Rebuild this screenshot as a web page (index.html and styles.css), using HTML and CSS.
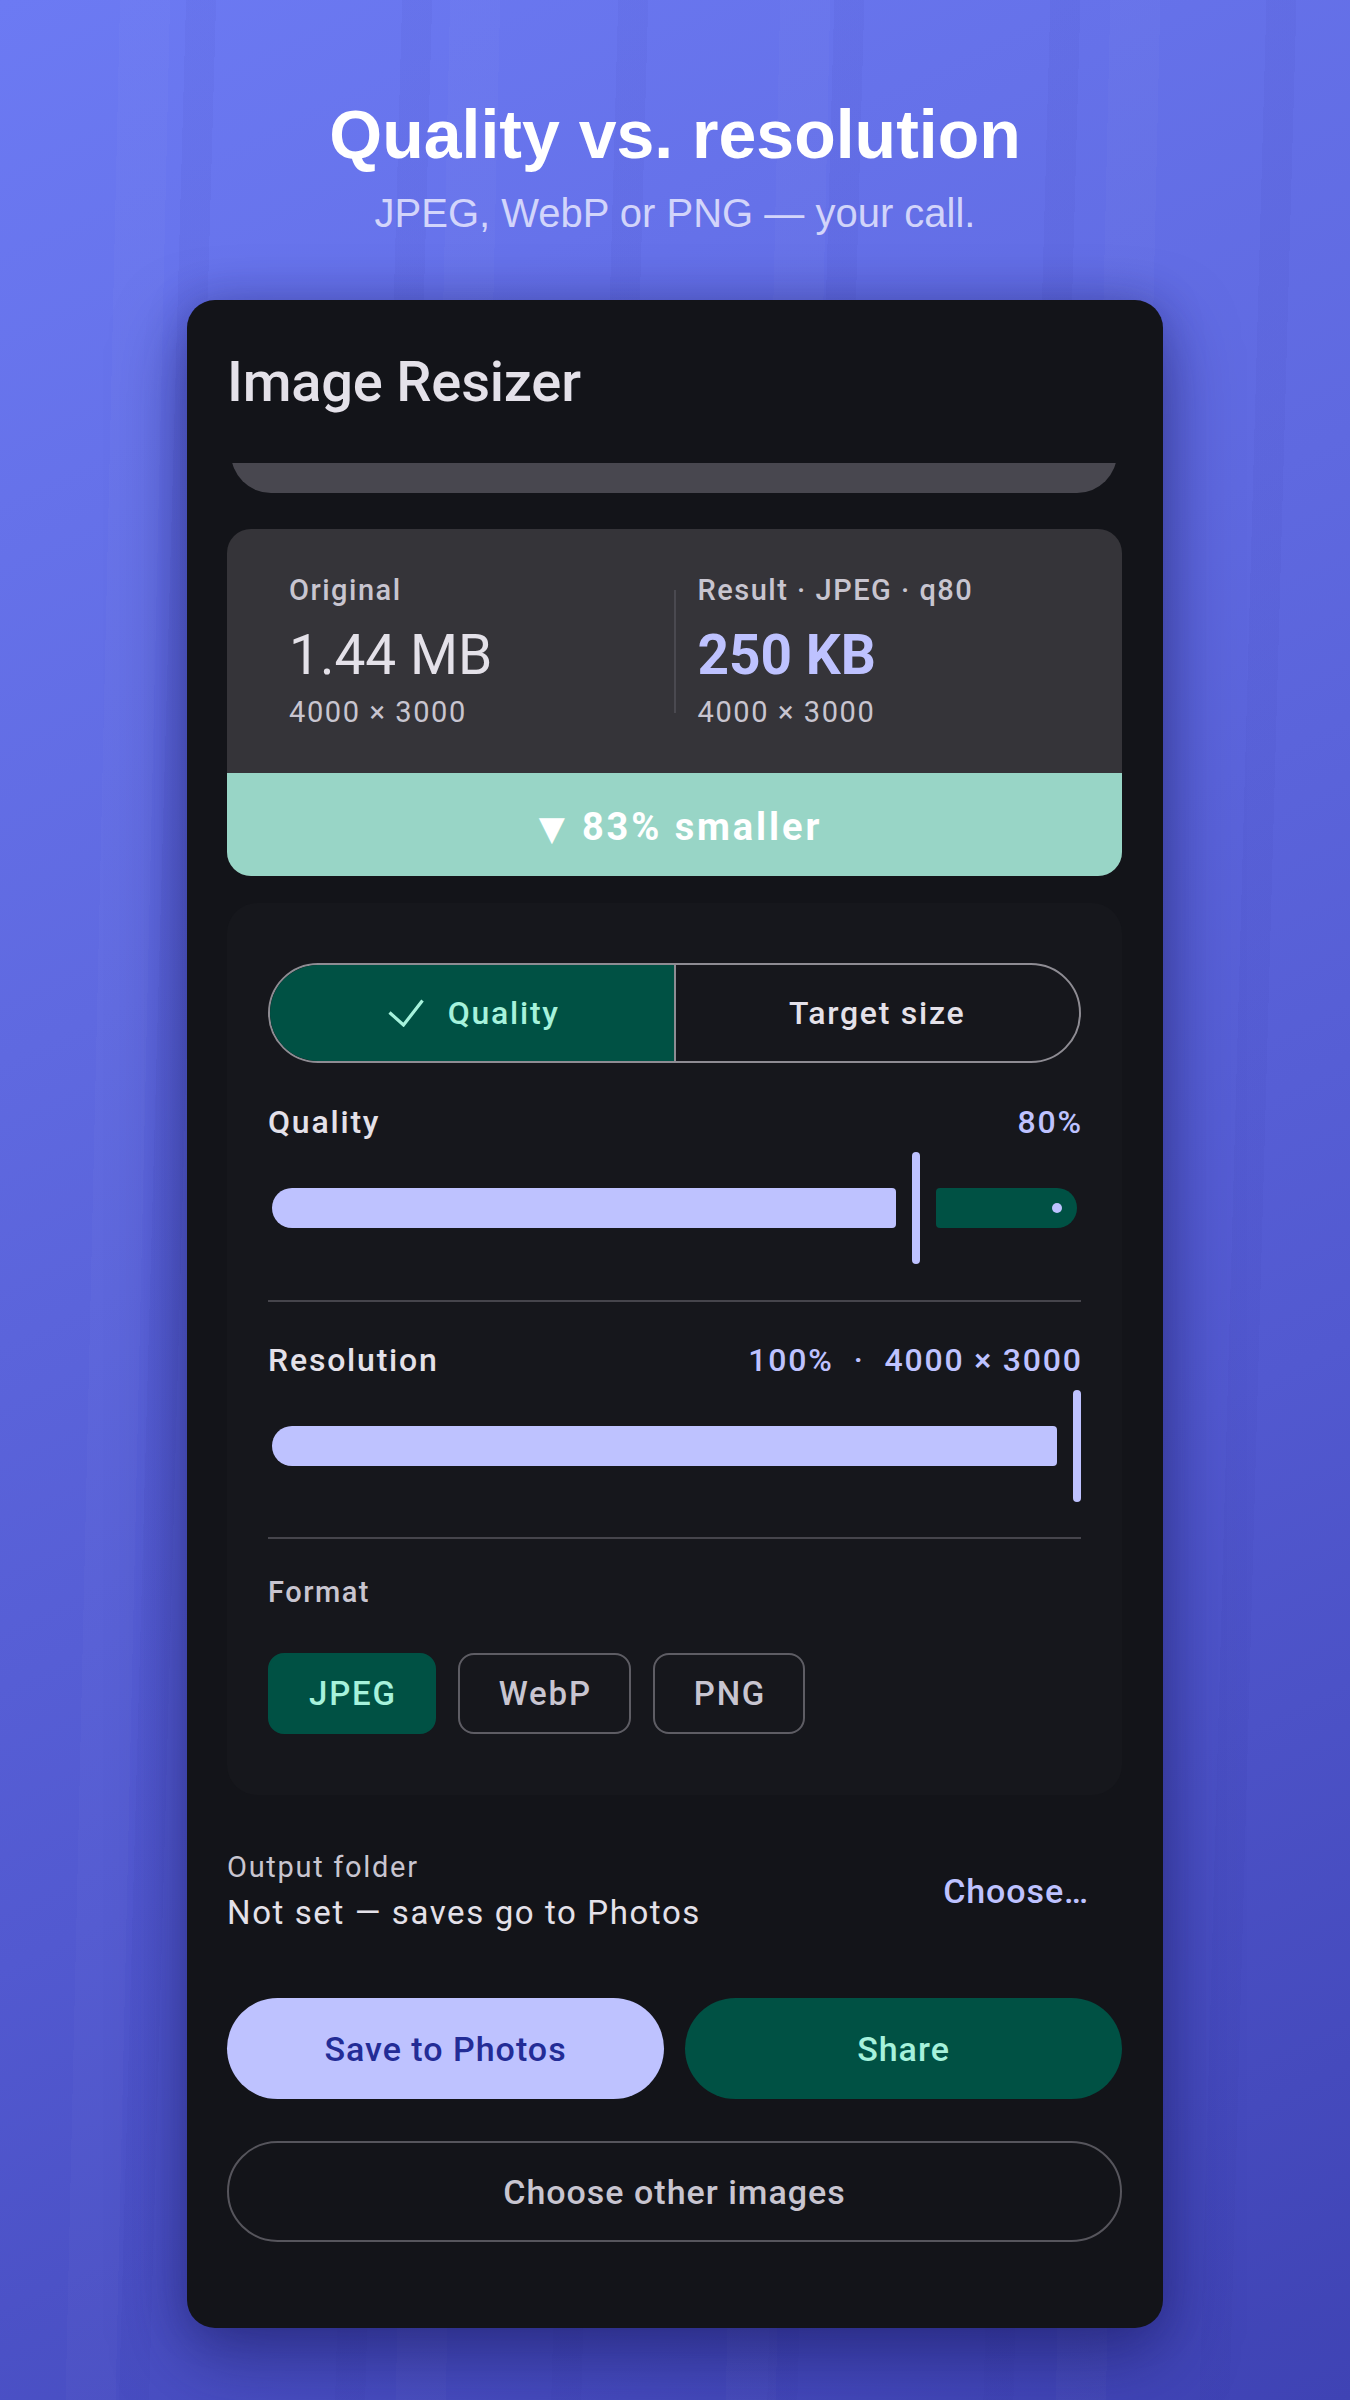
FILE: index.html
```html
<!DOCTYPE html>
<html lang="en">
<head>
<meta charset="utf-8">
<title>Image Resizer — Quality vs. resolution</title>
<link rel="stylesheet" href="styles.css">
</head>
<body>
<main class="stage">
  <header class="hero">
    <h1 class="hero-title">Quality vs. resolution</h1>
    <p class="hero-sub">JPEG, WebP or PNG — your call.</p>
  </header>

  <section class="card">
    <h2 class="app-title">Image Resizer</h2>

    <div class="preview-clip"><div class="preview"></div></div>

    <div class="stats">
      <div class="stats-row">
        <div class="stat">
          <div class="stat-label">Original</div>
          <div class="stat-value">1.44 MB</div>
          <div class="stat-dims">4000 × 3000</div>
        </div>
        <div class="stat-divider"></div>
        <div class="stat">
          <div class="stat-label">Result · JPEG · q80</div>
          <div class="stat-value stat-accent">250 KB</div>
          <div class="stat-dims">4000 × 3000</div>
        </div>
      </div>
      <div class="savings"><span class="savings-arrow">▼</span>83% smaller</div>
    </div>

    <div class="panel">
      <div class="segmented">
        <button class="seg seg-on">
          <svg class="seg-check" width="36" height="28" viewBox="0 0 36 28" aria-hidden="true">
            <polyline points="1.5,13.5 15.5,26 34.5,1.5" fill="none" stroke="currentColor" stroke-width="3.2" stroke-linecap="butt" stroke-linejoin="miter"/>
          </svg>
          <span>Quality</span>
        </button>
        <button class="seg">Target size</button>
      </div>

      <div class="field-head">
        <span class="field-label">Quality</span>
        <span class="field-value">80%</span>
      </div>
      <div class="slider">
        <div class="track-active" style="width: calc(80% - 20px)"></div>
        <div class="handle"></div>
        <div class="track-rest"><span class="stop"></span></div>
      </div>

      <div class="divider"></div>

      <div class="field-head">
        <span class="field-label">Resolution</span>
        <span class="field-value"><span>100%</span><span class="dot">·</span><span>4000 × 3000</span></span>
      </div>
      <div class="slider">
        <div class="track-active" style="width: calc(100% - 20px)"></div>
        <div class="handle"></div>
      </div>

      <div class="divider divider-2"></div>

      <div class="format-label">Format</div>
      <div class="chips">
        <button class="chip chip-on">JPEG</button>
        <button class="chip">WebP</button>
        <button class="chip">PNG</button>
      </div>
    </div>

    <div class="output-row">
      <div class="output-text">
        <div class="output-label">Output folder</div>
        <div class="output-value">Not set — saves go to Photos</div>
      </div>
      <button class="text-btn">Choose…</button>
    </div>

    <div class="actions">
      <button class="btn btn-primary">Save to Photos</button>
      <button class="btn btn-tonal">Share</button>
    </div>

    <button class="btn btn-outline">Choose other images</button>
  </section>
</main>
</body>
</html>
```

FILE: styles.css
```css
* { box-sizing: border-box; }

html, body {
  margin: 0;
  padding: 0;
}

body {
  width: 1350px;
  min-height: 2400px;
  font-family: Roboto, "Noto Sans", "DejaVu Sans", sans-serif;
  color: #e4e1e9;
  background:
    repeating-linear-gradient(91.6deg, rgba(40, 40, 150, 0) 0px, rgba(40, 40, 150, 0) 186px, rgba(40, 40, 150, 0.05) 186px, rgba(40, 40, 150, 0.05) 216px, rgba(40, 40, 150, 0) 216px, rgba(40, 40, 150, 0) 212px),
    repeating-linear-gradient(91.3deg, rgba(255, 255, 255, 0) 0px, rgba(255, 255, 255, 0) 120px, rgba(255, 255, 255, 0.018) 120px, rgba(255, 255, 255, 0.018) 170px, rgba(255, 255, 255, 0) 170px, rgba(255, 255, 255, 0) 330px),
    linear-gradient(155deg, #6c7af3 0%, #5f69e0 35%, #5259d0 65%, #3f43b4 100%);
}

button {
  font-family: inherit;
  border: none;
  background: none;
  color: inherit;
  padding: 0;
  margin: 0;
  cursor: pointer;
}

.stage {
  display: flex;
  flex-direction: column;
  align-items: center;
  padding-top: 96px;
  padding-bottom: 72px;
}

/* hero */
.hero {
  text-align: center;
}

.hero-title {
  margin: 0;
  font-family: "Liberation Sans", Arial, sans-serif;
  font-weight: 700;
  font-size: 68px;
  line-height: 77px;
  color: #ffffff;
}

.hero-sub {
  margin: 16px 0 0;
  font-family: "Liberation Sans", Arial, sans-serif;
  font-size: 40px;
  line-height: 48px;
  color: rgba(236, 236, 255, 0.82);
}

/* card */
.card {
  width: 976px;
  margin-top: 63px;
  padding: 49px 41px 86px 40px;
  background: #131419;
  border-radius: 28px;
  box-shadow: 0 28px 70px rgba(22, 22, 90, 0.5), 0 0 40px rgba(22, 22, 90, 0.25);
  display: flex;
  flex-direction: column;
}

.app-title {
  margin: 0;
  font-size: 56px;
  line-height: 66px;
  font-weight: 500;
  color: #e4e1e9;
  letter-spacing: -0.2px;
}

.preview-clip {
  margin: 48px 5px 0 4px;
  height: 30px;
  overflow: hidden;
}

.preview {
  height: 120px;
  margin-top: -90px;
  background: #48474f;
  border-radius: 40px;
}

/* stats */
.stats {
  margin-top: 36px;
  border-radius: 24px;
  overflow: hidden;
  background: #353439;
}

.stats-row {
  display: flex;
  align-items: center;
  padding: 43px 62px;
}

.stat {
  flex: 1;
  display: flex;
  flex-direction: column;
}

.stat-divider {
  width: 2px;
  height: 123px;
  margin: 0 22px;
  background: #4a4950;
}

.stat-label {
  font-size: 29px;
  line-height: 36px;
  font-weight: 500;
  letter-spacing: 1.5px;
  color: #c8c5d0;
}

.stat-value {
  margin-top: 15px;
  font-size: 55px;
  line-height: 64px;
  font-weight: 400;
  color: #e4e1e9;
}

.stat-accent {
  font-weight: 700;
  color: #bec2ff;
}

.stat-dims {
  margin-top: 7px;
  font-size: 29px;
  line-height: 36px;
  letter-spacing: 1.6px;
  color: #c8c5d0;
}

.savings {
  height: 103px;
  padding-top: 6px;
  padding-left: 12px;
  line-height: 97px;
  text-align: center;
  background: #98d5c6;
  color: #ffffff;
  font-size: 38px;
  font-weight: 700;
  letter-spacing: 2.9px;
}

.savings-arrow {
  margin-right: 17px;
  font-size: 34px;
  letter-spacing: 0;
}

/* controls panel */
.panel {
  margin-top: 27px;
  padding: 60px 41px 61px;
  background: #16171c;
  border-radius: 30px;
  display: flex;
  flex-direction: column;
}

.segmented {
  display: flex;
  height: 100px;
  border: 2px solid #8e8c93;
  border-radius: 50px;
  overflow: hidden;
}

.seg {
  flex: 1 1 0;
  min-width: 0;
  display: flex;
  align-items: center;
  justify-content: center;
  gap: 24px;
  font-size: 32px;
  font-weight: 500;
  letter-spacing: 1.75px;
  color: #e4e1e9;
}

.seg + .seg {
  border-left: 2px solid #8e8c93;
}

.seg-on {
  background: #005144;
  color: #a6f2dc;
}

.seg-check {
  display: block;
  margin-left: 4px;
}

.field-head {
  margin-top: 39px;
  display: flex;
  justify-content: space-between;
  align-items: center;
  height: 40px;
  line-height: 40px;
  font-size: 32px;
  font-weight: 500;
  letter-spacing: 1.8px;
}

.divider + .field-head {
  margin-top: 38px;
}

.field-label {
  color: #e4e1e9;
}

.field-value {
  color: #bec2ff;
  display: flex;
  margin-right: -1.8px;
}

.dot {
  margin: 0 20px 0 20px;
}

.slider {
  margin: 10px 4px 0;
  height: 112px;
  display: flex;
  align-items: center;
}

.track-active {
  flex: none;
  height: 40px;
  background: #bec2ff;
  border-radius: 20px 4px 4px 20px;
}

.handle {
  flex: none;
  width: 8px;
  height: 112px;
  margin: 0 16px;
  border-radius: 4px;
  background: #bec2ff;
}

.track-rest {
  flex: 1 1 0;
  min-width: 0;
  height: 40px;
  background: #005144;
  border-radius: 4px 20px 20px 4px;
  display: flex;
  align-items: center;
  justify-content: flex-end;
  padding-right: 15px;
}

.stop {
  width: 10px;
  height: 10px;
  border-radius: 50%;
  background: #bec2ff;
}

.divider {
  margin-top: 36px;
  height: 2px;
  background: #46454c;
}

.divider-2 {
  margin-top: 35px;
}

.format-label {
  margin-top: 35px;
  font-size: 29px;
  line-height: 36px;
  font-weight: 500;
  letter-spacing: 1.5px;
  color: #c8c5d0;
}

.chips {
  margin-top: 43px;
  display: flex;
  gap: 22px;
}

.chip {
  height: 81px;
  padding: 0 37px 0 39px;
  border: 2px solid #5e5d64;
  border-radius: 16px;
  font-size: 33px;
  font-weight: 500;
  letter-spacing: 1.8px;
  color: #c8c5d0;
}

.chip-on {
  background: #005144;
  border-color: #005144;
  color: #a6f2dc;
}

/* output folder */
.output-row {
  margin-top: 54px;
  display: flex;
  align-items: center;
  justify-content: space-between;
}

.output-label {
  font-size: 29px;
  line-height: 36px;
  letter-spacing: 1.7px;
  color: #c8c5d0;
}

.output-value {
  margin-top: 8px;
  font-size: 33px;
  line-height: 40px;
  letter-spacing: 1.6px;
  color: #e4e1e9;
}

.text-btn {
  padding: 0 33px 0 34px;
  font-size: 34px;
  line-height: 40px;
  font-weight: 500;
  letter-spacing: 0.9px;
  color: #bec2ff;
}

/* buttons */
.actions {
  margin-top: 65px;
  display: grid;
  grid-template-columns: 1fr 1fr;
  gap: 21px;
}

.btn {
  height: 101px;
  border-radius: 51px;
  font-size: 34px;
  font-weight: 500;
  letter-spacing: 1px;
  display: flex;
  align-items: center;
  justify-content: center;
}

.btn-primary {
  background: #bec2ff;
  color: #232c96;
}

.btn-tonal {
  background: #005144;
  color: #a6f2dc;
}

.btn-outline {
  margin-top: 42px;
  width: 100%;
  border: 2px solid #56555c;
  color: #c8c5d0;
}
```
